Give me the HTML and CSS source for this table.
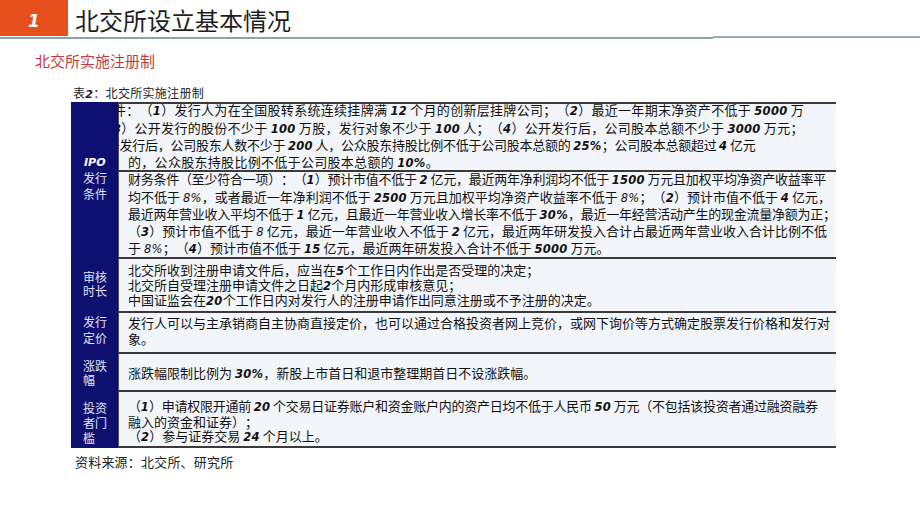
FILE: index.html
```html
<!DOCTYPE html>
<html lang="zh">
<head>
<meta charset="utf-8">
<title>北交所设立基本情况</title>
<link rel="stylesheet" href="styles.css">
</head>
<body>
<header class="top">
  <div class="badge">1</div>
  <h1 class="title">北交所设立基本情况</h1>
</header>
<div class="rule"><div class="rule-l"></div><div class="rule-r"></div></div>

<h2 class="subtitle">北交所实施注册制</h2>

<div class="caption">表<b class="capnum">2</b>：北交所实施注册制</div>

<div class="table">
  <div class="lab lab-ipo">
    <span class="lab-text"><span class="ipo">IPO</span><br>发行<br>条件</span>
  </div>
  <div class="cell cell-1a">
    <span class="ln shift">发行条件：（<span class="n">1</span>）发行人为在全国股转系统连续挂牌满 <span class="n">12</span> 个月的创新层挂牌公司；（<span class="n">2</span>）最近一年期末净资产不低于 <span class="n">5000</span> 万</span>
    <span class="ln shift">元；（<span class="n">3</span>）公开发行的股份不少于 <span class="n">100</span> 万股，发行对象不少于 <span class="n">100</span> 人；（<span class="n">4</span>）公开发行后，公司股本总额不少于 <span class="n">3000</span> 万元；</span>
    <span class="ln shift tight"><span class="n">5</span>）公开发行后，公司股东人数不少于 <span class="n">200</span> 人，公众股东持股比例不低于公司股本总额的 <span class="n">25%</span>；公司股本总额超过 <span class="n">4</span> 亿元</span>
    <span class="ln">的，公众股东持股比例不低于公司股本总额的 <span class="n">10%</span>。</span>
  </div>
  <div class="cell cell-1b">
    <span class="ln tight">财务条件（至少符合一项）：（<span class="n">1</span>）预计市值不低于 <span class="n">2</span> 亿元，最近两年净利润均不低于 <span class="n">1500</span> 万元且加权平均净资产收益率平</span>
    <span class="ln">均不低于 <span class="r">8%</span>，或者最近一年净利润不低于 <span class="n">2500</span> 万元且加权平均净资产收益率不低于 <span class="r">8%</span>；（<span class="n">2</span>）预计市值不低于 <span class="n">4</span> 亿元，</span>
    <span class="ln tight">最近两年营业收入平均不低于 <span class="n">1</span> 亿元，且最近一年营业收入增长率不低于 <span class="n">30%</span>，最近一年经营活动产生的现金流量净额为正；</span>
    <span class="ln">（<span class="n">3</span>）预计市值不低于 <span class="r">8</span> 亿元，最近一年营业收入不低于 <span class="n">2</span> 亿元，最近两年研发投入合计占最近两年营业收入合计比例不低</span>
    <span class="ln">于 <span class="r">8%</span>；（<span class="n">4</span>）预计市值不低于 <span class="n">15</span> 亿元，最近两年研发投入合计不低于 <span class="n">5000</span> 万元。</span>
  </div>

  <div class="lab lab-14"><span class="lab-text">审核<br>时长</span></div>
  <div class="cell cell-2">
    <span class="ln">北交所收到注册申请文件后，应当在<span class="n">5</span>个工作日内作出是否受理的决定；</span>
    <span class="ln">北交所自受理注册申请文件之日起<span class="n">2</span>个月内形成审核意见；</span>
    <span class="ln">中国证监会在<span class="n">20</span>个工作日内对发行人的注册申请作出同意注册或不予注册的决定。</span>
  </div>

  <div class="lab lab-16"><span class="lab-text">发行<br>定价</span></div>
  <div class="cell cell-3">
    <span class="ln">发行人可以与主承销商自主协商直接定价，也可以通过合格投资者网上竞价，或网下询价等方式确定股票发行价格和发行对</span>
    <span class="ln">象。</span>
  </div>

  <div class="lab lab-13"><span class="lab-text">涨跌<br>幅</span></div>
  <div class="cell cell-4">
    <span class="ln">涨跌幅限制比例为 <span class="n">30%</span>，新股上市首日和退市整理期首日不设涨跌幅。</span>
  </div>

  <div class="lab lab-15"><span class="lab-text">投资<br>者门<br>槛</span></div>
  <div class="cell cell-5">
    <span class="ln tight">（<span class="n">1</span>）申请权限开通前 <span class="n">20</span> 个交易日证券账户和资金账户内的资产日均不低于人民币 <span class="n">50</span> 万元（不包括该投资者通过融资融券</span>
    <span class="ln">融入的资金和证券）；</span>
    <span class="ln">（<span class="n">2</span>）参与证券交易 <span class="n">24</span> 个月以上。</span>
  </div>
</div>

<p class="source">资料来源：北交所、研究所</p>
</body>
</html>
```

FILE: styles.css
```css
* { box-sizing: border-box; }

body {
  margin: 0;
  background: #ffffff;
  font-family: "Noto Sans CJK SC", "Noto Sans", sans-serif;
  color: #111111;
  width: 920px;
  height: 518px;
  overflow: hidden;
  text-spacing-trim: space-all;
}

.top {
  display: flex;
  height: 36px;
}

.badge {
  width: 68px;
  height: 36px;
  background: #e64e1c;
  color: #ffffff;
  font-family: "DejaVu Sans", sans-serif;
  font-weight: bold;
  font-style: oblique;
  font-size: 17px;
  display: flex;
  align-items: center;
  justify-content: center;
  padding-top: 5px;
}

.title {
  margin: 0 0 0 7px;
  font-size: 24px;
  font-weight: 400;
  line-height: 36px;
  padding-top: 2px;
  color: #1e1e1e;
}

.rule {
  display: flex;
  height: 3px;
}

.rule-l {
  width: 713px;
  height: 2px;
  margin-top: 1px;
  background: #8ea2ac;
}

.rule-r {
  flex: 1;
  height: 2px;
  background: #9aadb5;
}

.subtitle {
  margin: 12px 0 0 35px;
  font-size: 15px;
  font-weight: 400;
  line-height: 20px;
  color: #c43a3c;
}

.caption {
  margin: 15px 0 0 73px;
  font-size: 12px;
  line-height: 14px;
  height: 16px;
  color: #222222;
  letter-spacing: 0.3px;
}

.capnum {
  font-family: "DejaVu Sans", sans-serif;
  font-style: oblique;
  font-size: 11px;
}

.table {
  margin-left: 71px;
  width: 758px;
  display: grid;
  grid-template-columns: 47px 1fr;
  grid-template-rows: 68px 87px 54px 41px 38px 58px;
}

.lab {
  background: #0e1070;
  color: #dfe3f6;
  font-size: 12px;
  padding-left: 12px;
  display: flex;
  flex-direction: column;
  justify-content: center;
  line-height: 15px;
  position: relative;
}

.lab-ipo {
  grid-row: span 2;
  line-height: 15.5px;
  padding-bottom: 5px;
}

.lab-ipo::after {
  content: "";
  position: absolute;
  left: 0;
  top: 0;
  right: 0;
  bottom: 0;
  background: rgba(14, 16, 112, 0.6);
  z-index: 1;
}

.lab-text {
  position: relative;
  z-index: 2;
}

.ipo {
  font-family: "DejaVu Sans", sans-serif;
  font-weight: bold;
  font-style: oblique;
  font-size: 11px;
  color: #ffffff;
  padding-left: 1px;
}

.lab-14 { line-height: 14px; }
.lab-16 { line-height: 16px; padding-bottom: 3px; }
.lab-13 { line-height: 14px; padding-top: 3px; }
.lab-15 { line-height: 15px; padding-top: 6px; }

.cell {
  background: #f2f6fa;
  border-top: 2px solid #3a3a3a;
  border-left: 1px solid #4c4c55;
  padding-left: 9px;
  display: flex;
  flex-direction: column;
  justify-content: center;
  font-size: 13px;
  letter-spacing: 0;
  white-space: nowrap;
}

.ln { display: block; }

.shift { margin-left: -55px; }

.tight { letter-spacing: -0.25px; }

.cell-1a { line-height: 16.3px; letter-spacing: 0.3px; }
.cell-1b { line-height: 15.3px; }
.cell-2 { line-height: 14px; }
.cell-3 { line-height: 16px; padding-bottom: 4px; }
.cell-4 { line-height: 16px; padding-top: 2px; }
.cell-5 {
  line-height: 14.6px;
  border-bottom: 2px solid #3a3a3a;
  padding-top: 6px;
}

.n {
  font-family: "DejaVu Sans", sans-serif;
  font-weight: bold;
  font-style: oblique;
  font-size: 11.5px;
  letter-spacing: 0.3px;
}

.r {
  font-family: "DejaVu Sans", sans-serif;
  font-style: oblique;
  font-size: 11.5px;
  letter-spacing: 0.3px;
}

.source {
  margin: 6px 0 0 75px;
  font-size: 13px;
  line-height: 16px;
  color: #222222;
  letter-spacing: 0.2px;
}
```
